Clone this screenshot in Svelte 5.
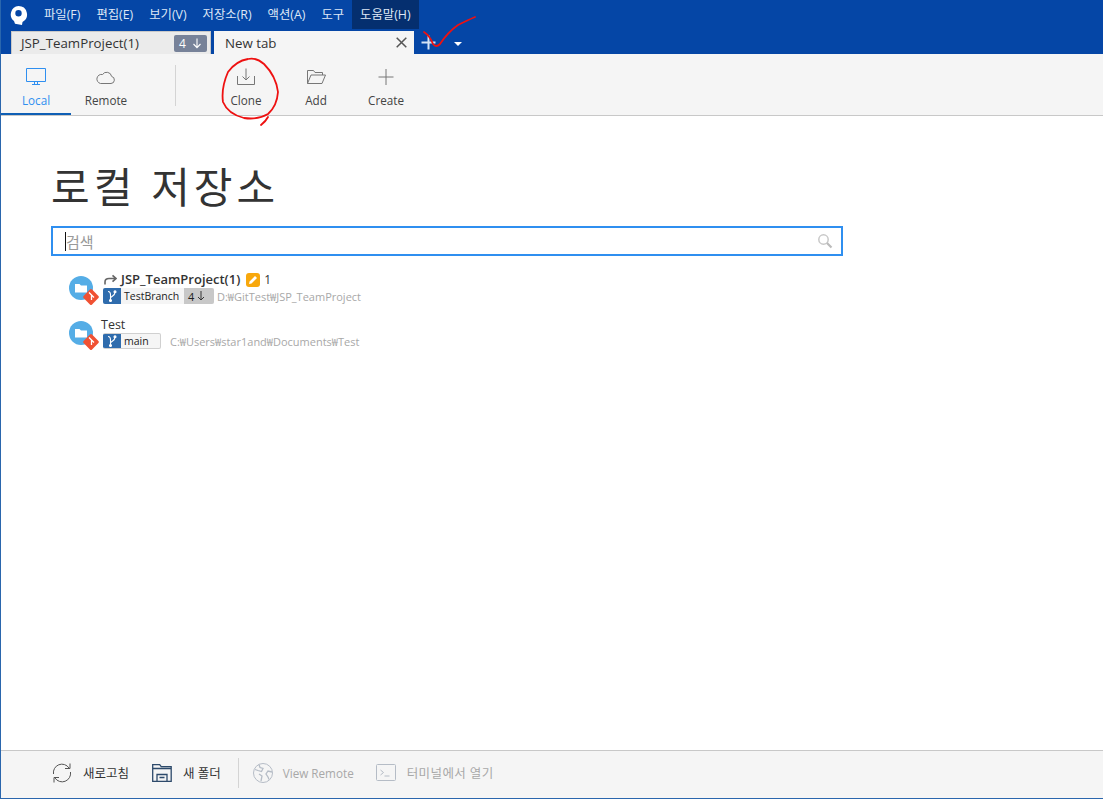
<script>
  const menus = ['파일(F)', '편집(E)', '보기(V)', '저장소(R)', '액션(A)', '도구', '도움말(H)'];
</script>

<div class="win">
  <header class="titlebar">
    <svg class="logo" width="18" height="19" viewBox="0 0 18 19">
      <path fill="#fff" fill-rule="evenodd" d="M8.500 0a8.500 8.500 0 0 1 4 16l-0.500 3-7-1.300-1-2.600A8.500 8.500 0 0 1 8.500 0zM8.500 4a3.200 3.200 0 1 0 0 6.400 3.200 3.200 0 0 0 0-6.400z"/>
    </svg>
    <nav class="menu">
      {#each menus as m, i}
        <span class="menu-item" class:active={i === menus.length - 1}>{m}</span>
      {/each}
    </nav>
  </header>

  <div class="tabbar">
    <div class="tab inactive">
      <span class="tab-title">JSP_TeamProject(1)</span>
      <span class="tab-badge">4
        <svg width="10" height="11" viewBox="0 0 10 11"><path d="M5 0.500v9M1.500 6l3.500 3.700L8.500 6" fill="none" stroke="#fff" stroke-width="1.100"/></svg>
      </span>
    </div>
    <div class="tab current">
      <span class="tab-title">New tab</span>
      <svg width="11" height="11" viewBox="0 0 11 11"><path d="M0.700 0.700l9.600 9.600M10.300 0.700l-9.600 9.600" stroke="#555" stroke-width="1.500"/></svg>
    </div>
    <svg class="plus" width="15" height="15" viewBox="0 0 15 15"><path d="M7.500 0.500v14M0.500 7.500h14" stroke="#d5e3f5" stroke-width="2"/></svg>
    <svg class="caret" width="8" height="4" viewBox="0 0 8 4"><path d="M0 0h8L4 4z" fill="#fff"/></svg>
  </div>

  <div class="toolbar">
    <button class="tool selected">
      <svg width="20" height="18" viewBox="0 0 20 18" fill="none" stroke="#2f8ff0"><path d="M0.500 0.500h19v13h-19zM6 16.500h8M8.500 14v2.500M11.500 14v2.500"/></svg>
      <span>Local</span>
    </button>
    <button class="tool">
      <svg width="20" height="18" viewBox="0 0 20 18" fill="none" stroke="#777"><path d="M4.500 15.500h10.500a3.600 3.600 0 0 0 .6-7.100A5 5 0 0 0 6.500 6.500 4.500 4.500 0 0 0 4.500 15.500z"/></svg>
      <span>Remote</span>
    </button>
    <div class="vsep"></div>
    <button class="tool">
      <svg width="18" height="18" viewBox="0 0 18 18" fill="none" stroke="#777"><path d="M0.500 8v8.500h17V8M9 0.500v11.500M5.500 8.500l3.500 3.500 3.500-3.500"/></svg>
      <span>Clone</span>
    </button>
    <button class="tool">
      <svg width="20" height="18" viewBox="0 0 20 18" fill="none" stroke="#777"><path d="M1.500 15.500v-13h6l1.500 2h7.500v2.500M1.500 15.500h14.500l3.500-8.500H5z"/></svg>
      <span>Add</span>
    </button>
    <button class="tool">
      <svg width="18" height="18" viewBox="0 0 18 18" fill="none" stroke="#777"><path d="M9 1v16M1.500 9h15"/></svg>
      <span>Create</span>
    </button>
  </div>

  <main class="content">
    <h1>로컬 저장소</h1>
    <div class="search">
      <i class="cursor"></i>
      <span class="placeholder">검색</span>
      <svg width="16" height="16" viewBox="0 0 16 16" fill="none"><circle cx="6.500" cy="6.500" r="4.700" stroke="#c8c8c8" stroke-width="1.500"/><path d="M10 10l4.500 4.500" stroke="#bbb" stroke-width="2.200"/></svg>
    </div>

    <div class="repos">
      <div class="repo">
        <span class="repo-icon">
          <svg width="32" height="32" viewBox="0 0 32 32">
            <circle cx="12" cy="12" r="12" fill="#55ade6"/>
            <path d="M6 8h4.500l1.500 1.500h6v7H6z" fill="#fff"/>
            <rect x="16" y="15" width="12" height="12" rx="1.500" transform="rotate(45 22 21)" fill="#f05133"/>
            <path d="M20 16.500l5 5M22.500 19v5" stroke="#fff" stroke-width="1.300"/>
          </svg>
        </span>
        <div class="repo-text">
          <div class="repo-name">
            <svg class="fwd" width="13" height="11" viewBox="0 0 13 11" fill="none"><path d="M1 10.500V8Q1 4.500 5 4.500h6M8.500 1.300L12 4.500 8.500 7.700" stroke="#666" stroke-width="1.600"/></svg>
            <strong>JSP_TeamProject(1)</strong>
            <span class="pencil">
              <svg width="10" height="10" viewBox="0 0 10 10"><path d="M1 9l0.600-2.500L7 1l2 2-5.500 5.400z" fill="#fff"/></svg>
            </span>
            <span class="count">1</span>
          </div>
          <div class="repo-meta">
            <span class="branch wide">
              <span class="branch-icon">
                <svg width="12" height="12" viewBox="0 0 12 12" fill="none" stroke="#fff" stroke-width="1.100"><path d="M2 1.500C4 1.500 4.500 3 4.500 5V10.500M9 2C9 6 5.500 6 4.500 8"/><circle cx="9" cy="1.800" r="1" fill="#fff"/><circle cx="4.500" cy="10.500" r="1" fill="#fff"/></svg>
              </span>
              <span class="branch-name">TestBranch</span>
              <span class="behind">4
                <svg width="8" height="10" viewBox="0 0 8 10"><path d="M4 0v9M1 6l3 3 3-3" fill="none" stroke="#333"/></svg>
              </span>
            </span>
            <span class="path">D:₩GitTest₩JSP_TeamProject</span>
          </div>
        </div>
      </div>

      <div class="repo">
        <span class="repo-icon">
          <svg width="32" height="32" viewBox="0 0 32 32">
            <circle cx="12" cy="12" r="12" fill="#55ade6"/>
            <path d="M6 8h4.500l1.500 1.500h6v7H6z" fill="#fff"/>
            <rect x="16" y="15" width="12" height="12" rx="1.500" transform="rotate(45 22 21)" fill="#f05133"/>
            <path d="M20 16.500l5 5M22.500 19v5" stroke="#fff" stroke-width="1.300"/>
          </svg>
        </span>
        <div class="repo-text">
          <div class="repo-name plain">Test</div>
          <div class="repo-meta">
            <span class="branch short">
              <span class="branch-icon">
                <svg width="12" height="12" viewBox="0 0 12 12" fill="none" stroke="#fff" stroke-width="1.100"><path d="M2 1.500C4 1.500 4.500 3 4.500 5V10.500M9 2C9 6 5.500 6 4.500 8"/><circle cx="9" cy="1.800" r="1" fill="#fff"/><circle cx="4.500" cy="10.500" r="1" fill="#fff"/></svg>
              </span>
              <span class="branch-name">main</span>
            </span>
            <span class="path far">C:₩Users₩star1and₩Documents₩Test</span>
          </div>
        </div>
      </div>
    </div>
  </main>

  <footer class="footer">
    <button class="foot">
      <svg width="20" height="20" viewBox="0 0 20 20" fill="none" stroke="#555"><path d="M1.500 11A8.500 8.500 0 0 1 17 5M18.500 9A8.500 8.500 0 0 1 3 15"/><path d="M18 0.500V5.500H13M2 19.500V14.500H7" stroke-width="1"/></svg>
      <span>새로고침</span>
    </button>
    <button class="foot">
      <svg width="20" height="18" viewBox="0 0 20 18" fill="none" stroke="#2d4a6b" stroke-width="1.300"><path d="M0.700 0.700h7l1.500 2h10v14.600h-18.500zM0.700 4.500h18.500M5 17v-6.500h10V17M7.500 13.500h5"/></svg>
      <span>새 폴더</span>
    </button>
    <div class="fsep"></div>
    <button class="foot off latin">
      <svg width="20" height="20" viewBox="0 0 20 20" fill="none" stroke="#b5bcc6"><circle cx="10" cy="10" r="9.500"/><path d="M6 1.500l1 3 3 1-1.500 3-3.500-1-3-1M19 9l-4-1-2 3 2 3 1 2.500M6 11l3 2-1 5" stroke-width="1.300"/></svg>
      <span>View Remote</span>
    </button>
    <button class="foot off wide-ko">
      <svg width="20" height="17" viewBox="0 0 20 17" fill="none" stroke="#b5bcc6"><rect x="0.500" y="0.500" width="19" height="16" rx="1"/><path d="M4.500 6l3 2.500-3 2.500M8.500 12h5"/></svg>
      <span>터미널에서 열기</span>
    </button>
  </footer>

  <svg class="ink" width="1103" height="799" viewBox="0 0 1103 799" fill="none" stroke="#ee1111" stroke-width="1.800" stroke-linecap="round" stroke-linejoin="round">
    <path d="M424 32Q430 36 433 44Q436 48 440 44Q448 32 458 25Q468 20 475 17"/>
    <path d="M248 59Q256 57 264 64Q276 76 278 92Q277 106 268 114Q258 120 244 118Q228 114 223 102Q221 88 228 72Q236 61 248 59ZM268 117Q266 121 261 125"/>
  </svg>
</div>

<style>
  :global(body) {
    margin: 0;
    background: #fff;
  }

  .win {
    position: relative;
    box-sizing: border-box;
    width: 1103px;
    height: 799px;
    display: flex;
    flex-direction: column;
    background: #fff;
    border-left: 1px solid #2a66ad;
    border-bottom: 1px solid #2a66ad;
    font-family: "Open Sans", "Noto Sans CJK KR", sans-serif;
    overflow: hidden;
  }

  .titlebar {
    height: 30px;
    display: flex;
    background: #0546a6;
    flex: none;
  }

  .logo {
    margin: 6px 0 0 9px;
  }

  .menu {
    display: flex;
    margin-left: 8px;
    height: 29px;
  }

  .menu-item {
    padding: 0 8px;
    line-height: 30px;
    font-size: 12.350px;
    color: #dfe8f6;
    white-space: nowrap;
  }

  .menu-item.active {
    background: #052f6f;
  }

  .tabbar {
    height: 24px;
    flex: none;
    display: flex;
    align-items: flex-end;
    background: #0546a6;
    padding-left: 10px;
  }

  .tab {
    box-sizing: border-box;
    height: 23px;
    display: flex;
    align-items: center;
    justify-content: space-between;
    font-size: 13.300px;
    color: #333;
  }

  .tab.inactive {
    width: 200px;
    background: #ebebeb;
    border: 1px solid #c9c9c9;
    border-bottom: 0;
    padding: 0 3px 0 9px;
  }

  .tab.current {
    width: 200px;
    margin-left: 3px;
    background: #f5f5f5;
    padding: 0 7px 0 11px;
  }

  .tab-badge {
    width: 33px;
    height: 17px;
    box-sizing: border-box;
    padding: 0 5px;
    display: flex;
    align-items: center;
    justify-content: space-between;
    background: #778299;
    border-radius: 2px;
    color: #fff;
    font-size: 12px;
  }

  .plus {
    margin: 0 0 4px 7px;
  }

  .caret {
    margin: 0 0 8px 18px;
  }

  .toolbar {
    box-sizing: border-box;
    height: 62px;
    flex: none;
    display: flex;
    background: #f5f5f5;
    border-bottom: 1px solid #c8c8c8;
  }

  .tool {
    width: 70px;
    height: 61px;
    padding: 14px 0 0;
    border: 0;
    background: none;
    display: flex;
    flex-direction: column;
    align-items: center;
    gap: 6px;
    font: inherit;
    font-size: 11.700px;
    line-height: 17px;
    color: #444;
  }

  .tool.selected {
    color: #2f8ff0;
    box-shadow: inset 0 -2px 0 #0f5fb5;
  }

  .vsep {
    width: 1px;
    height: 41px;
    margin: 11px 35px 0 34px;
    background: #d4d4d4;
  }

  .content {
    flex: 1;
    padding: 41px 0 0 50px;
    display: flex;
    flex-direction: column;
    align-items: flex-start;
  }

  h1 {
    margin: 0 0 9px 0;
    font-size: 42px;
    line-height: 60px;
    font-weight: 400;
    color: #333;
    letter-spacing: 4px;
    white-space: nowrap;
  }

  .search {
    position: relative;
    box-sizing: border-box;
    width: 792px;
    height: 30px;
    border: 2px solid #2f8ff0;
    display: flex;
    align-items: center;
    justify-content: space-between;
    padding: 0 8px 0 13px;
  }

  .cursor {
    position: absolute;
    left: 12px;
    top: 4px;
    width: 1px;
    height: 19px;
    background: #111;
  }

  .placeholder {
    font-size: 15px;
    color: #999;
  }

  .repos {
    margin: 15px 0 0 18px;
    display: flex;
    flex-direction: column;
    gap: 13px;
  }

  .repo {
    display: flex;
    height: 32px;
  }

  .repo-icon {
    width: 32px;
    height: 32px;
    margin-top: 5px;
    flex: none;
  }

  .repo-text {
    display: flex;
    flex-direction: column;
  }

  .repo-name {
    height: 17px;
    display: flex;
    align-items: center;
    font-size: 12.500px;
    color: #333;
  }

  .repo-name strong {
    font-size: 13px;
    font-weight: 600;
    margin: 0 0 2px 4px;
  }

  .fwd {
    margin-left: 3px;
  }

  .pencil {
    width: 14px;
    height: 14px;
    margin-left: 6px;
    border-radius: 3px;
    background: #f8a80d;
    display: flex;
    align-items: center;
    justify-content: center;
  }

  .count {
    margin-left: 4px;
    font-size: 12px;
  }

  .repo-meta {
    display: flex;
    align-items: center;
    margin-left: 2px;
    height: 16px;
  }

  .branch {
    box-sizing: border-box;
    height: 16px;
    display: flex;
    align-items: center;
    background: #f5f5f5;
    border: 1px solid #d0d0d0;
    border-radius: 2px;
    font-size: 10.500px;
    color: #222;
    overflow: hidden;
  }

  .branch.wide {
    width: 111px;
    border: 0;
  }

  .branch.short {
    width: 58px;
    border-left: 0;
  }

  .branch-icon {
    width: 18px;
    height: 16px;
    flex: none;
    background: #2f6cad;
    display: flex;
    align-items: center;
    justify-content: center;
  }

  .branch-name {
    margin-left: 3px;
    flex: 1;
  }

  .behind {
    width: 30px;
    height: 16px;
    box-sizing: border-box;
    padding-left: 4px;
    background: #c8c8c8;
    display: flex;
    align-items: center;
    gap: 3px;
    font-size: 11px;
  }

  .path {
    margin-left: 3px;
    font-size: 11px;
    color: #a8a8a8;
    white-space: nowrap;
  }

  .path.far {
    margin-left: 9px;
  }

  .footer {
    box-sizing: border-box;
    height: 48px;
    flex: none;
    display: flex;
    align-items: center;
    padding: 0 0 4px 51px;
    background: #f5f5f5;
    border-top: 1px solid #c8c8c8;
  }

  .foot {
    border: 0;
    padding: 0;
    background: none;
    display: flex;
    align-items: center;
    gap: 11px;
    font: inherit;
    font-size: 12.500px;
    color: #333;
    margin-right: 23px;
  }

  .foot.off {
    color: #a8a8a8;
  }

  .foot.latin {
    font-size: 11.700px;
    gap: 10px;
    margin-right: 22px;
  }

  .foot.wide-ko {
    letter-spacing: 0.400px;
  }

  .fsep {
    width: 1px;
    height: 30px;
    margin: 0 14px 0 -6px;
    background: #d4d4d4;
  }

  .ink {
    position: absolute;
    left: -1px;
    top: 0;
    pointer-events: none;
  }
</style>
